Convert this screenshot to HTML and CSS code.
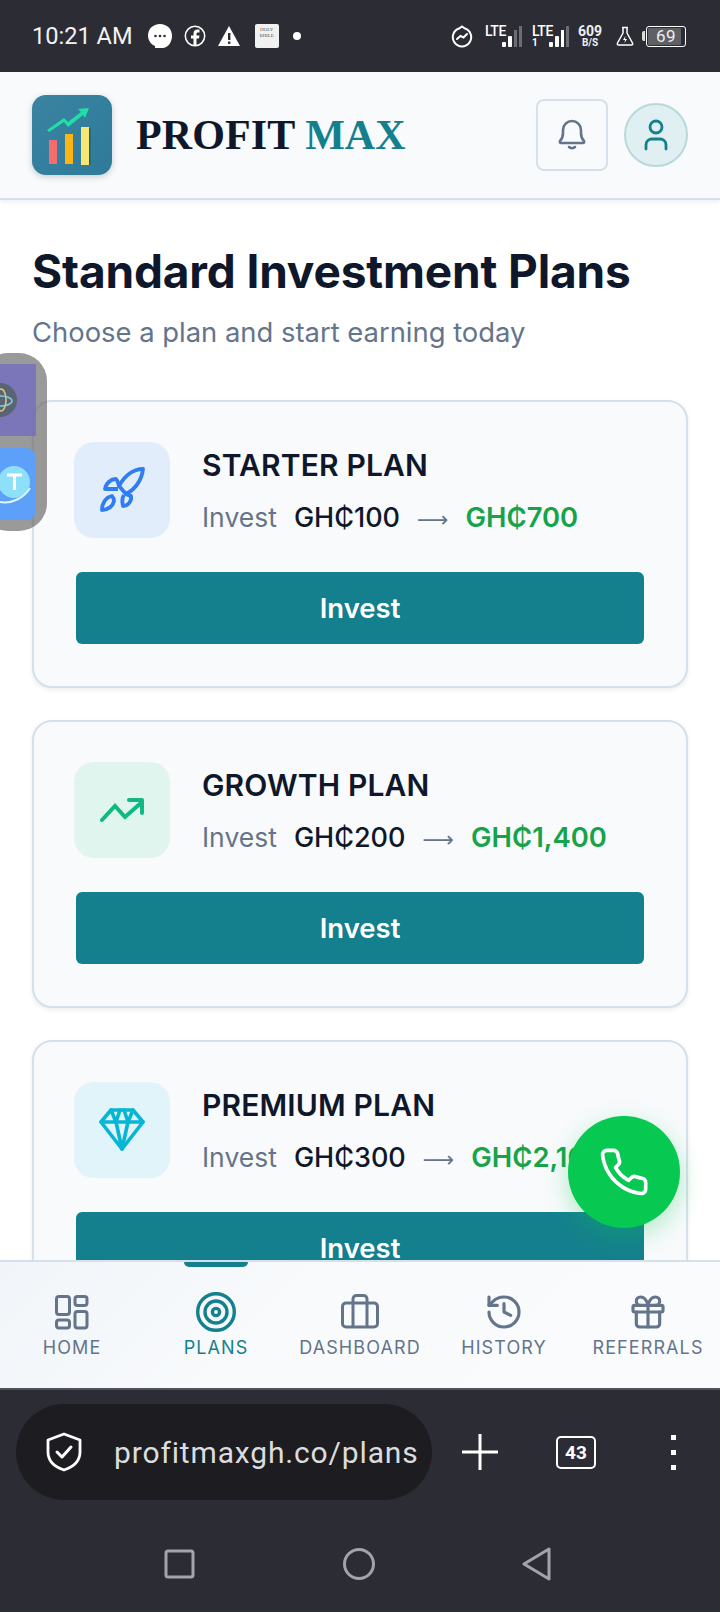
FILE: index.html
```html
<!DOCTYPE html>
<html lang="en">
<head>
<meta charset="utf-8">
<title>Profit Max</title>
<link rel="stylesheet" href="styles.css">
</head>
<body>
<div class="phone">
  <div class="status">
    <div class="status-left">
      <span class="time">10:21 AM</span>
      <svg class="si" width="26" height="26" viewBox="0 0 26 26"><path fill="#fff" d="M13 1C6 1 1 6 1 12.500c0 5 3 9 7 10.500v2h8c6-1 9-6.500 9-12.500C25 6 20 1 13 1z"/><circle cx="8.500" cy="13" r="1.300" fill="#2c2c35"/><circle cx="13" cy="13" r="1.300" fill="#2c2c35"/><circle cx="17.500" cy="13" r="1.300" fill="#2c2c35"/></svg>
      <svg class="si" width="22" height="22" viewBox="0 0 22 22"><circle cx="11" cy="11" r="9.700" fill="none" stroke="#fff" stroke-width="1.500"/><path fill="#fff" d="M9.500 21v-7.500H7v-3h2.500V8.500c0-2.500 1.500-4 4-4h2v3h-1.500c-1 0-1.500.5-1.500 1.500v1.500h3l-.5 3h-2.500V21z"/></svg>
      <svg class="si" width="24" height="22" viewBox="0 0 24 22"><path fill="#fff" d="M12 1 23 21H1z"/><rect x="11" y="8" width="2.400" height="7" fill="#2c2c35"/><rect x="11" y="16.500" width="2.400" height="2.400" fill="#2c2c35"/></svg>
      <div class="bible"><span>HOLY</span><span>BIBLE</span></div>
      <span class="dot"></span>
    </div>
    <div class="status-right">
      <svg class="sr-swirl" width="22" height="24" viewBox="0 0 22 24"><path fill="none" stroke="#fff" stroke-width="2" d="M11 2.500 14 4.500A9.200 9.200 0 1 1 8 4.500z"/><path fill="none" stroke="#fff" stroke-width="2" stroke-linecap="round" d="M6 15l3.500-3 3 1.500L16 10"/></svg>
      <div class="net net-a">
        <span class="lte">LTE</span>
        <svg width="20" height="22" viewBox="0 0 20 22"><rect x="0" y="16" width="4" height="5" rx="1" fill="#fff"/><rect x="6" y="10" width="4" height="11" rx="1" fill="#fff"/><rect x="12" y="4" width="3" height="17" fill="#6d6d75"/><rect x="17" y="0" width="3" height="21" fill="#6d6d75"/></svg>
      </div>
      <div class="net net-b">
        <div class="lte-stack"><span class="lte">LTE</span><span class="sim">1</span></div>
        <svg width="20" height="22" viewBox="0 0 20 22"><rect x="0" y="16" width="4" height="5" rx="1" fill="#fff"/><rect x="6" y="10" width="4" height="11" rx="1" fill="#fff"/><rect x="12" y="4" width="3" height="17" fill="#fff"/><rect x="17" y="0" width="3" height="21" fill="#6d6d75"/></svg>
      </div>
      <div class="speed"><span class="speed-n">609</span><span class="speed-u">B/S</span></div>
      <svg class="flask" width="18" height="20" viewBox="0 0 18 20"><path fill="none" stroke="#fff" stroke-width="1.500" stroke-linejoin="round" d="M6 1.500h6M7 1.500V7L1.500 17c-.5 1 0 2 1 2h13c1 0 1.500-1 1-2L11 7V1.500"/><path fill="#fff" d="M9.500 10 7 14h2l-.5 3 2.500-4H9z"/></svg>
      <div class="battery"><span class="tip"></span><div class="batt-body"><span class="batt-fill"></span><span class="batt-n">69</span></div></div>
    </div>
  </div>

  <header class="head">
    <div class="brand">
      <svg class="logo" width="80" height="80" viewBox="0 0 80 80">
        <defs><linearGradient id="lg" x1="0" y1="0" x2="1" y2="1"><stop offset="0" stop-color="#3a84a2"/><stop offset="1" stop-color="#2e7a98"/></linearGradient></defs>
        <rect width="80" height="80" rx="14" fill="url(#lg)"/>
        <rect x="17" y="45" width="8" height="24" fill="#f36d6d"/>
        <rect x="33" y="39" width="8" height="30" fill="#fdb415"/>
        <rect x="49" y="32" width="8" height="38" fill="#f6e772"/>
        <rect x="57" y="33" width="1.500" height="37" fill="#1e5f78"/>
        <path fill="#22dfa8" d="M15 35l17-12 4 4 13-10-3-3 11-1-4 10-2-3-15 12-4-5-15 10z"/>
      </svg>
      <div class="brand-name">PROFIT <span class="max">MAX</span></div>
    </div>
    <div class="head-actions">
      <div class="bell-btn">
        <svg width="32" height="34" viewBox="0 0 32 34"><path fill="none" stroke="#64748b" stroke-width="2.600" stroke-linejoin="round" d="M4 23c2-2 3-4 3-8V12c0-5 4-9 9-9s9 4 9 9v3c0 4 1 6 3 8 .5 1 0 2-1 2H5c-1 0-1.500-1-1-2z"/><path fill="none" stroke="#64748b" stroke-width="2.500" stroke-linecap="round" d="M13 29c1.500 1.500 4.500 1.500 6 0"/></svg>
      </div>
      <div class="avatar">
        <svg width="32" height="34" viewBox="0 0 32 34"><circle cx="16" cy="9" r="6" fill="none" stroke="#15808d" stroke-width="2.800"/><path fill="none" stroke="#15808d" stroke-width="2.800" stroke-linecap="round" d="M6 31v-4c0-4 3-6 6-6h8c3 0 6 2 6 6v4"/></svg>
      </div>
    </div>
  </header>

  <main class="content">
    <h1 class="title">Standard Investment Plans</h1>
    <p class="sub">Choose a plan and start earning today</p>

    <section class="card">
      <div class="card-top">
        <div class="tile tile-blue">
          <svg width="48" height="48" viewBox="0 0 48 48"><g fill="none" stroke="#2f7df0" stroke-width="3.800" stroke-linejoin="round" transform="translate(2 1)"><path d="M43 2C34 2 25 8 19 19l7 8C36 22 42 12 43 2z"/><path d="M19 19c-1-3-1-5-3-7-5 0-10 4-11 10h13"/><path d="M26 27c1 1 3 1 5 2 1 5-3 10-8 10-1-4-1-8 1-11"/><path d="M12 29C6 30 2 36 2 43c6 0 11-4 12-9 0-2-1-4-2-5z"/></g></svg>
        </div>
        <div class="plan">
          <div class="plan-name">STARTER PLAN</div>
          <div class="plan-row"><span class="lbl">Invest</span><span class="amt">GH₵100</span><span class="arrow">⟶</span><span class="ret">GH₵700</span></div>
        </div>
      </div>
      <div class="btn">Invest</div>
    </section>

    <section class="card">
      <div class="card-top">
        <div class="tile tile-green">
          <svg width="48" height="48" viewBox="0 0 48 48"><path fill="none" stroke="#10b981" stroke-width="4" stroke-linecap="round" d="M4 34 17 20l10 11L44 16"/><path fill="none" stroke="#10b981" stroke-width="4" stroke-linecap="round" stroke-linejoin="round" d="M31 14h13v13"/></svg>
        </div>
        <div class="plan">
          <div class="plan-name">GROWTH PLAN</div>
          <div class="plan-row"><span class="lbl">Invest</span><span class="amt">GH₵200</span><span class="arrow">⟶</span><span class="ret">GH₵1,400</span></div>
        </div>
      </div>
      <div class="btn">Invest</div>
    </section>

    <section class="card">
      <div class="card-top">
        <div class="tile tile-cyan">
          <svg width="48" height="48" viewBox="0 0 48 48"><g fill="none" stroke="#06b6d4" stroke-width="3.600" stroke-linejoin="round" stroke-linecap="round"><path d="M13 4h22l10 12-21 27L3 16z"/><path d="M3 16h42"/><path d="M13 4l5 12 6 27 6-27 5-12"/><path d="M18 16l4-12M30 16L26 4"/></g></svg>
        </div>
        <div class="plan">
          <div class="plan-name">PREMIUM PLAN</div>
          <div class="plan-row"><span class="lbl">Invest</span><span class="amt">GH₵300</span><span class="arrow">⟶</span><span class="ret">GH₵2,100</span></div>
        </div>
      </div>
      <div class="btn">Invest</div>
    </section>

    <div class="fab">
      <svg width="52" height="52" viewBox="0 0 24 24"><path fill="none" stroke="#fff" stroke-width="1.700" stroke-linejoin="round" d="M22 16.920v3a2 2 0 0 1-2.180 2 19.790 19.790 0 0 1-8.630-3.070 19.500 19.500 0 0 1-6-6 19.790 19.790 0 0 1-3.070-8.670A2 2 0 0 1 4.110 2h3a2 2 0 0 1 2 1.720 12.840 12.840 0 0 0 .7 2.810 2 2 0 0 1-.45 2.110L8.090 9.910a16 16 0 0 0 6 6l1.270-1.270a2 2 0 0 1 2.110-.45 12.840 12.840 0 0 0 2.810.7A2 2 0 0 1 22 16.920z"/></svg>
    </div>
  </main>

  <nav class="tabs">
    <div class="tab">
      <svg width="40" height="40" viewBox="0 0 40 40"><g fill="none" stroke="#64748b" stroke-width="3"><rect x="4.500" y="4.500" width="13" height="18" rx="2.500"/><rect x="23" y="4.500" width="12" height="9" rx="2.500"/><rect x="4.500" y="28" width="13" height="8" rx="2.500"/><rect x="23" y="19.500" width="12" height="16.500" rx="2.500"/></g></svg>
      <span>HOME</span>
    </div>
    <div class="tab tab-on">
      <span class="marker"></span>
      <svg width="40" height="40" viewBox="0 0 40 40"><g fill="none" stroke="#15808d" stroke-width="3.400"><circle cx="20" cy="20" r="18.300"/><circle cx="20" cy="20" r="11"/><circle cx="20" cy="20" r="3.600"/></g></svg>
      <span>PLANS</span>
    </div>
    <div class="tab">
      <svg width="40" height="40" viewBox="0 0 40 40"><g fill="none" stroke="#64748b" stroke-width="3" stroke-linejoin="round"><rect x="2.500" y="11" width="35" height="24" rx="3.500"/><path d="M13 35V7c0-2 1.500-3.500 3.500-3.500h7C25.500 3.500 27 5 27 7v28"/></g></svg>
      <span>DASHBOARD</span>
    </div>
    <div class="tab">
      <svg width="40" height="40" viewBox="0 0 24 24"><g fill="none" stroke="#64748b" stroke-width="1.900" stroke-linecap="round" stroke-linejoin="round"><path d="M3 12a9 9 0 1 0 9-9 9.750 9.750 0 0 0-6.740 2.740L3 8"/><path d="M3 3v5h5"/><path d="M12 7v5l4 2"/></g></svg>
      <span>HISTORY</span>
    </div>
    <div class="tab">
      <svg width="40" height="40" viewBox="0 0 24 24"><g fill="none" stroke="#64748b" stroke-width="1.900" stroke-linecap="round" stroke-linejoin="round"><rect x="3" y="8" width="18" height="4" rx="1"/><path d="M12 8v13"/><path d="M19 12v7a2 2 0 0 1-2 2H7a2 2 0 0 1-2-2v-7"/><path d="M7.500 8a2.500 2.500 0 0 1 0-5A4.800 8 0 0 1 12 8a4.800 8 0 0 1 4.500-5 2.500 2.500 0 0 1 0 5"/></g></svg>
      <span>REFERRALS</span>
    </div>
  </nav>

  <div class="chrome">
    <div class="urlrow">
      <div class="urlpill">
        <svg width="36" height="40" viewBox="0 0 36 40"><path fill="none" stroke="#fff" stroke-width="2.800" stroke-linejoin="round" d="M18 2 34 8v12c0 9-7 15-16 18C9 35 2 29 2 20V8z"/><path fill="none" stroke="#fff" stroke-width="3" stroke-linecap="round" stroke-linejoin="round" d="M11 20l5 5 9-10"/></svg>
        <span class="url">profitmaxgh.co/plans</span>
      </div>
      <svg class="plus" width="36" height="36" viewBox="0 0 36 36"><path stroke="#fff" stroke-width="3" d="M0 18h36M18 0v36"/></svg>
      <div class="tabcount">43</div>
      <div class="kebab"><i></i><i></i><i></i></div>
    </div>
    <div class="sysnav">
      <svg width="32" height="32" viewBox="0 0 32 32"><rect x="2" y="3" width="27" height="26" rx="2" fill="none" stroke="#a3a3a8" stroke-width="3"/></svg>
      <svg width="34" height="34" viewBox="0 0 34 34"><circle cx="17" cy="17" r="14.500" fill="none" stroke="#a3a3a8" stroke-width="3"/></svg>
      <svg width="32" height="34" viewBox="0 0 32 34"><path fill="none" stroke="#a3a3a8" stroke-width="3" stroke-linejoin="round" d="M28 2 3 17l25 15z"/></svg>
    </div>
  </div>

  <div class="bubble">
    <div class="app app-a">
      <svg width="48" height="72" viewBox="0 0 48 72"><circle cx="0" cy="36" r="17" fill="#5a6472"/><ellipse cx="1" cy="36" rx="5" ry="11" fill="none" stroke="#e9c77c" stroke-width="1.500"/><ellipse cx="1" cy="37" rx="11" ry="5" fill="none" stroke="#7fd0d8" stroke-width="1.500"/></svg>
    </div>
    <div class="app app-b">
      <svg width="36" height="72" viewBox="0 0 36 72"><circle cx="14" cy="34" r="16" fill="#8ee0f8"/><path fill="none" stroke="#dff6ff" stroke-width="2" d="M0 54c12 2 24-4 30-14"/><path fill="none" stroke="#fff" stroke-width="3" d="M7 27h15M14.500 27v15"/></svg>
    </div>
  </div>
</div>
</body>
</html>
```
FILE: styles.css
```css
* { box-sizing: border-box; }
html, body { margin: 0; padding: 0; }
body { background: #fff; font-family: "Inter", "Noto Sans", sans-serif; }
.phone { position: relative; width: 720px; height: 1612px; display: flex; flex-direction: column; overflow: hidden; background: #fff; }

/* status bar */
.status { height: 72px; flex: none; background: #2c2c35; color: #fff; display: flex; align-items: center; justify-content: space-between; padding: 0 34px 0 32px; }
.status-left { display: flex; align-items: center; }
.time { font-family: "Roboto", sans-serif; font-size: 23.600px; color: #f2f2f2; margin-right: 14px; }
.si { margin-right: 11px; flex: none; }
.bible { width: 24px; height: 24px; background: #f1f1f1; border-radius: 2px; margin: 0 14px 0 3px; color: #555; font-family: "Liberation Serif", serif; font-size: 5px; line-height: 6px; display: flex; flex-direction: column; align-items: center; padding-top: 3px; }
.dot { width: 8px; height: 8px; border-radius: 50%; background: #fff; }
.status-right { display: flex; align-items: center; }
.sr-swirl { margin-right: 12px; }
.net { display: flex; align-items: flex-end; justify-content: space-between; height: 24px; width: 37px; }
.net-a { margin-right: 10px; }
.net-b { margin-right: 9px; }
.lte { font-family: "Roboto", sans-serif; font-size: 14px; line-height: 14px; font-weight: 500; color: #fff; letter-spacing: -.5px; align-self: flex-start; margin-right: -4px; }
.lte-stack { display: flex; flex-direction: column; height: 24px; margin-right: -4px; }
.sim { font-family: "Roboto", sans-serif; font-size: 10px; line-height: 10px; font-weight: 700; }
.speed { width: 24px; display: flex; flex-direction: column; align-items: center; font-family: "Roboto", sans-serif; font-weight: 700; color: #f0f0f0; }
.speed-n { font-size: 14px; line-height: 14px; }
.speed-u { font-size: 10px; line-height: 10px; }
.flask { margin-left: 14px; margin-right: 8px; }
.battery { display: flex; align-items: center; }
.tip { width: 3px; height: 10px; background: #ddd; border-radius: 2px 0 0 2px; margin-right: 1px; }
.batt-body { position: relative; width: 40px; height: 21px; border: 1.500px solid #fff; border-radius: 3px; display: flex; align-items: center; justify-content: center; }
.batt-fill { position: absolute; left: 1px; top: 1px; bottom: 1px; width: 33px; background: #5f5f66; border-radius: 1px; }
.batt-n { position: relative; font-family: "Roboto", sans-serif; font-size: 17px; line-height: 17px; color: #eee; letter-spacing: .5px; }

/* header */
.head { height: 128px; flex: none; background: #f8fafc; border-bottom: 2px solid #d6e0ec; box-shadow: 0 2px 5px rgba(100,116,139,.12); display: flex; align-items: center; justify-content: space-between; padding: 0 32px; position: relative; z-index: 1; }
.brand { display: flex; align-items: center; gap: 24px; }
.logo { display: block; filter: drop-shadow(0 2px 3px rgba(15,23,42,.2)); }
.brand-name { font-family: "Liberation Serif", serif; font-size: 42px; font-weight: 700; letter-spacing: .1px; color: #0f172a; }
.max { color: #15808d; }
.head-actions { display: flex; align-items: center; gap: 16px; }
.bell-btn { width: 72px; height: 72px; border: 2px solid #d6e0ea; border-radius: 8px; display: flex; align-items: center; justify-content: center; }
.avatar { width: 64px; height: 64px; border-radius: 50%; background: #e0f0f2; border: 2px solid #b8d9dc; display: flex; align-items: center; justify-content: center; }

/* content */
.content { flex: 1; min-height: 0; overflow: hidden; padding: 43px 32px 0; position: relative; }
.title { margin: 0; font-family: "Inter", sans-serif; font-size: 46px; line-height: 56px; font-weight: 700; letter-spacing: -.15px; color: #0f172a; }
.sub { margin: 15px 0 50px; font-family: "Inter", sans-serif; font-size: 27.400px; line-height: 36px; font-weight: 400; color: #64748b; }
.card { height: 288px; margin-bottom: 32px; background: #f8fafc; border: 2px solid #d6e0ea; border-radius: 20px; padding: 40px 42px 0 40px; box-shadow: 0 2px 4px rgba(15,23,42,.08); }
.card-top { display: flex; align-items: center; gap: 32px; }
.tile { width: 96px; height: 96px; border-radius: 20px; display: flex; align-items: center; justify-content: center; flex: none; }
.tile-blue { background: #e1edfb; }
.tile-green { background: #e1f5ef; }
.tile-cyan { background: #e0f4fa; }
.plan { display: flex; flex-direction: column; gap: 15px; min-width: 0; padding-top: 3px; }
.plan-name { font-family: "Inter", sans-serif; font-size: 30px; line-height: 38px; font-weight: 600; letter-spacing: .15px; color: #0f172a; white-space: nowrap; }
.plan-row { display: flex; align-items: baseline; gap: 17px; font-size: 27px; line-height: 36px; white-space: nowrap; }
.lbl { color: #64748b; font-size: 26.500px; }
.amt { color: #0f172a; font-weight: 500; }
.arrow { color: #64748b; font-family: "DejaVu Sans", sans-serif; font-size: 22px; }
.ret { color: #16a34a; font-weight: 600; font-size: 27.400px; }
.btn { margin: 34px 0 0 2px; height: 72px; background: #15808d; color: #fff; border-radius: 6px; display: flex; align-items: center; justify-content: center; font-size: 27.500px; font-weight: 600; }
.fab { position: absolute; right: 40px; top: 916px; width: 112px; height: 112px; border-radius: 50%; background: #07c850; display: flex; align-items: center; justify-content: center; box-shadow: 0 8px 24px rgba(7,200,80,.3); }

/* tabs */
.tabs { height: 130px; flex: none; position: relative; z-index: 1; background: linear-gradient(135deg, #f1f5f9, #f8fafc 40%, #fafbfd); border-top: 2px solid #d6e0ec; border-bottom: 2px solid #52525a; display: grid; grid-template-columns: repeat(5, 144px); }
.tab { position: relative; display: flex; flex-direction: column; align-items: center; padding-top: 30px; gap: 5px; color: #64748b; font-size: 18px; line-height: 22px; letter-spacing: 1.100px; }
.tab svg { display: block; }
.tab-on { color: #15808d; }
.marker { position: absolute; top: 0; left: 40px; width: 64px; height: 5px; background: #15808d; border-radius: 0 0 5px 5px; }

/* browser chrome */
.chrome { flex: none; height: 222px; background: #2c2c35; display: flex; flex-direction: column; }
.urlrow { display: flex; align-items: center; padding: 14px 0 0 16px; height: 110px; flex: none; }
.urlpill { width: 416px; height: 96px; border-radius: 48px; background: #1c1c21; display: flex; align-items: center; padding-left: 30px; gap: 32px; flex: none; overflow: hidden; }
.url { font-family: "Roboto", sans-serif; font-size: 30px; letter-spacing: .85px; color: #dcdcdf; white-space: nowrap; }
.plus { margin-left: 30px; flex: none; }
.tabcount { margin-left: 58px; width: 40px; height: 33px; border: 2.500px solid #fff; border-radius: 5px; display: flex; align-items: center; justify-content: center; font-family: "Roboto", sans-serif; font-weight: 700; font-size: 19px; color: #fff; flex: none; }
.kebab { margin-left: 75px; display: flex; flex-direction: column; gap: 10px; }
.kebab i { display: block; width: 5px; height: 5px; background: #fff; }
.sysnav { flex: 1; display: flex; align-items: center; justify-content: space-between; padding: 16px 167px 0 164px; }

/* floating bubble */
.bubble { position: absolute; left: -20px; top: 353px; width: 67px; height: 178px; border-radius: 28px; background: rgba(100,100,100,.65); padding: 11px 11px 0 20px; display: flex; flex-direction: column; gap: 12px; z-index: 2; }
.app { width: 36px; height: 72px; overflow: hidden; }
.app-a { background: rgba(118,112,190,.85); }
.app-b { background: rgba(90,160,255,.95); border-radius: 0 10px 10px 0; }
```
